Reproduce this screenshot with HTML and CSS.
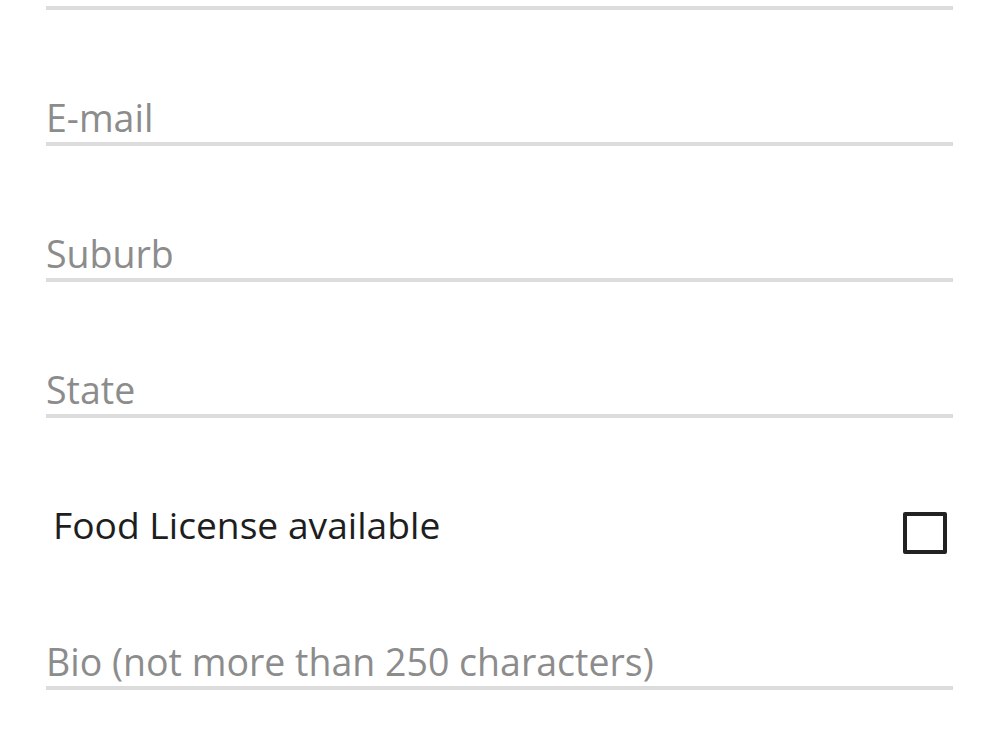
FILE: index.html
```html
<!DOCTYPE html>
<html lang="en">
<head>
    <meta charset="UTF-8">
    <meta name="viewport" content="width=device-width, initial-scale=1.0">
    <title>Vendor Profile</title>
    <link rel="stylesheet" href="styles.css">
</head>
<body>
    <form class="profile-form">
        <!-- bottom edge of the field above -->
        <div class="field field-top"></div>

        <div class="field">
            <input type="email" name="email" placeholder="E-mail">
        </div>

        <div class="field">
            <input type="text" name="suburb" placeholder="Suburb">
        </div>

        <div class="field">
            <input type="text" name="state" placeholder="State">
        </div>

        <div class="check-row">
            <label for="food-license">Food License available</label>
            <input type="checkbox" id="food-license" name="food-license">
        </div>

        <div class="field">
            <input type="text" name="bio" maxlength="250" placeholder="Bio (not more than 250 characters)">
        </div>
    </form>
</body>
</html>
```

FILE: styles.css
```css
body {
    font-family: 'Open Sans', sans-serif;
    background-color: #fff;
    margin: 0;
}

.profile-form {
    width: 907px;
    margin-left: 46px;
}

.field {
    height: 132px;
    display: flex;
    align-items: flex-end;
    border-bottom: 4px solid #dcdcdc;
}

.field-top {
    height: 6px;
}

.field input {
    width: 100%;
    border: none;
    outline: none;
    padding: 0;
    margin: 0;
    background: transparent;
    font-family: 'Open Sans', sans-serif;
    font-size: 37.5px;
    line-height: 48px;
    height: 48px;
    color: #222;
}

.field input::placeholder {
    color: #8c8c8c;
}

.check-row {
    height: 136px;
    display: flex;
    align-items: flex-end;
    justify-content: space-between;
}

.check-row label {
    font-size: 37.2px;
    line-height: 48px;
    color: #1e1e1e;
    padding-left: 7px;
    margin-bottom: 5px;
}

.check-row input[type="checkbox"] {
    appearance: none;
    -webkit-appearance: none;
    width: 44px;
    height: 42px;
    margin: 0 6px 0 0;
    border: 4px solid #222;
    border-radius: 2px;
    background: #fff;
    cursor: pointer;
}
```
